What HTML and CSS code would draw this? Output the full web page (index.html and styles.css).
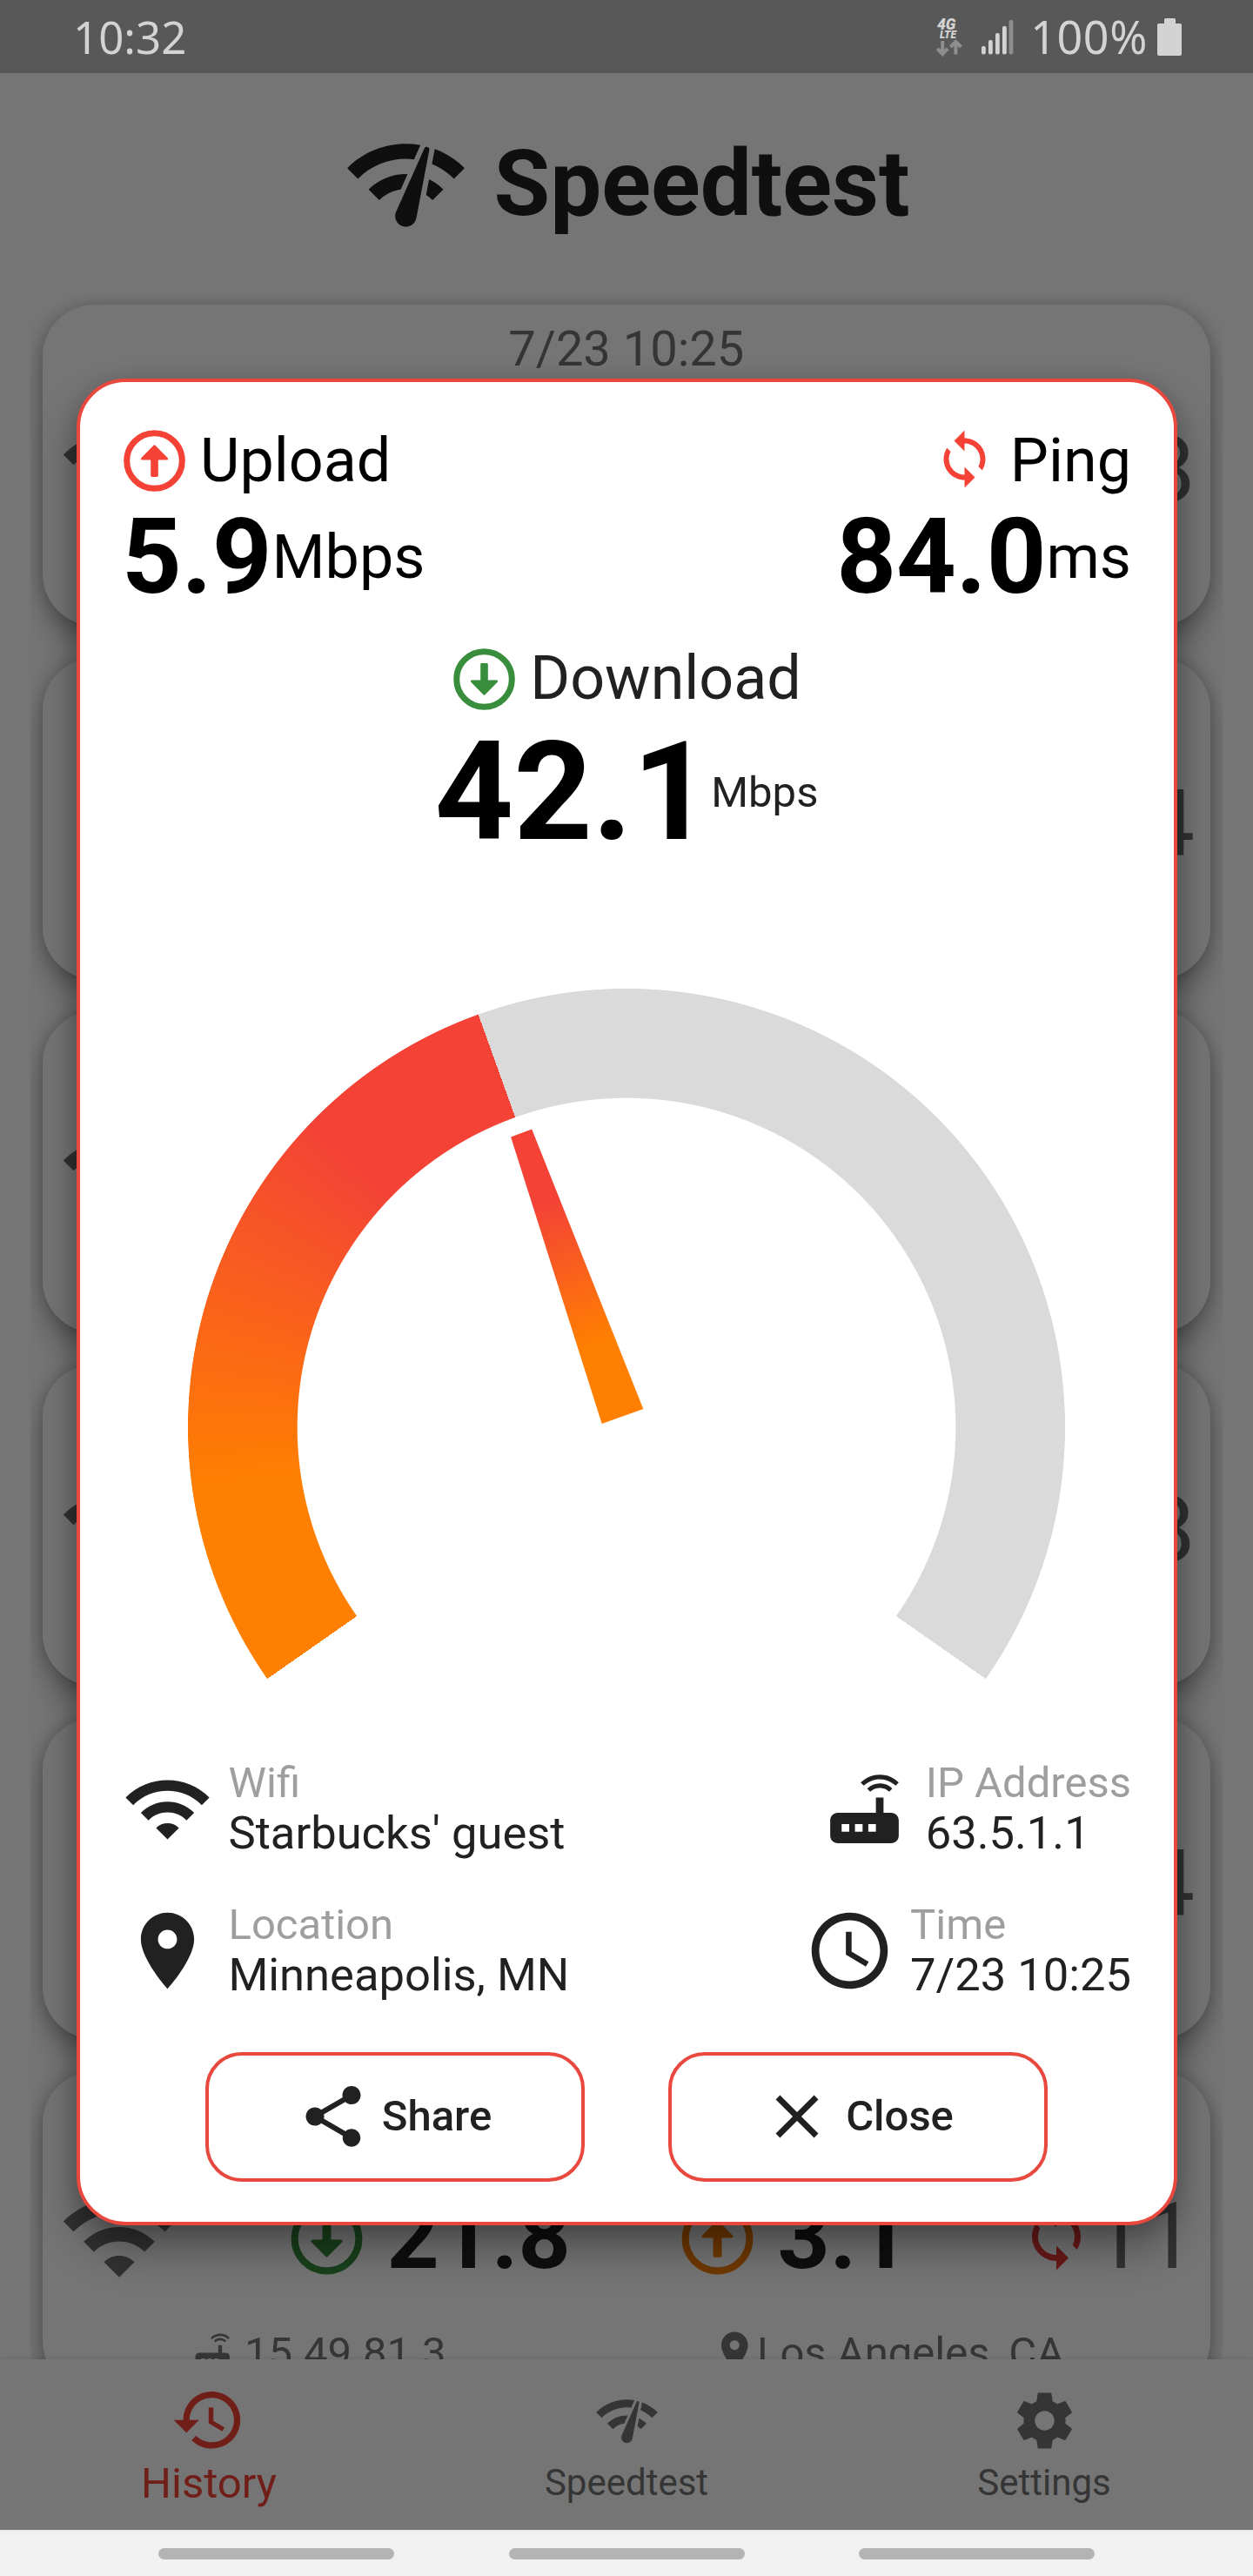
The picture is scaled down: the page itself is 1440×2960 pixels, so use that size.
FILE: index.html
```html
<!DOCTYPE html>
<html lang="en">
<head>
<meta charset="utf-8">
<title>Speedtest</title>
<link rel="stylesheet" href="styles.css">
</head>
<body>
<svg class="defs" width="0" height="0" aria-hidden="true">
  <defs>
    <symbol id="netcheck" viewBox="0 0 24 24"><path d="M15.9 5c-.17 0-.32.09-.41.23l-.07.15-5.18 11.65c-.16.29-.26.61-.26.96 0 1.11.9 2.01 2.01 2.01.96 0 1.77-.68 1.96-1.59l.01-.03L16.4 5.5c0-.28-.22-.5-.5-.5zM1 9l2 2c2.88-2.88 6.79-4.08 10.53-3.62l1.19-2.68C9.89 3.84 4.74 5.27 1 9zm20 2l2-2c-1.64-1.64-3.55-2.82-5.59-3.57l-.53 2.82c1.5.62 2.9 1.53 4.12 2.75zm-4 4l2-2c-.8-.8-1.7-1.42-2.66-1.89l-.55 2.92c.42.27.83.59 1.21.97zM5 13l2 2c1.13-1.13 2.56-1.79 4.03-2l1.28-2.88c-2.63-.08-5.3.87-7.31 2.88z"/></symbol>
    <symbol id="wifi" viewBox="0 0 24 24"><path d="M1 9l2 2c4.97-4.97 13.03-4.97 18 0l2-2C16.93 2.93 7.08 2.93 1 9zm8 8l3 3 3-3c-1.65-1.66-4.34-1.66-6 0zm-4-4l2 2c2.76-2.76 7.24-2.76 10 0l2-2C15.14 9.14 8.87 9.14 5 13z"/></symbol>
    <symbol id="up" viewBox="-37.5 -37.5 75 75"><circle r="31.8" fill="none" stroke="currentColor" stroke-width="7"/><path d="M0-16.7L14.2-2.3H2.9V17H-2.9V-2.3H-14.2z" stroke="currentColor" stroke-width="2.8" stroke-linejoin="round"/></symbol>
    <symbol id="down" viewBox="-37.5 -37.5 75 75"><circle r="31.8" fill="none" stroke="currentColor" stroke-width="7"/><path d="M0 16.7L14.2 2.3H2.9V-17H-2.9V2.3H-14.2z" stroke="currentColor" stroke-width="2.8" stroke-linejoin="round"/></symbol>
    <symbol id="sync" viewBox="0 0 24 24"><path d="M12 4V1L8 5l4 4V6c3.31 0 6 2.69 6 6 0 1.01-.25 1.97-.7 2.8l1.46 1.46C19.54 15.03 20 13.57 20 12c0-4.42-3.58-8-8-8zm0 14c-3.31 0-6-2.69-6-6 0-1.01.25-1.97.7-2.8L5.24 7.74C4.46 8.97 4 10.43 4 12c0 4.42 3.58 8 8 8v3l4-4-4-4v3z"/></symbol>
    <symbol id="router" viewBox="0 0 24 24"><path d="M20.2 5.9l.8-.8C19.6 3.7 17.8 3 16 3s-3.6.7-5 2.1l.8.8C13 4.8 14.5 4.2 16 4.2s3 .6 4.2 1.7zm-.9.8c-.9-.9-2.1-1.4-3.3-1.4s-2.4.5-3.3 1.4l.8.8c.7-.7 1.6-1 2.5-1s1.8.3 2.5 1l.8-.8zM19 13h-2V9h-2v4H5c-1.1 0-2 .9-2 2v4c0 1.1.9 2 2 2h14c1.1 0 2-.9 2-2v-4c0-1.1-.9-2-2-2zM8 18H6v-2h2v2zm3.500 0h-2v-2h2v2zm3.500 0h-2v-2h2v2z"/></symbol>
    <symbol id="place" viewBox="0 0 24 24"><path d="M12 2C8.13 2 5 5.13 5 9c0 5.25 7 13 7 13s7-7.75 7-13c0-3.87-3.13-7-7-7zm0 9.5c-1.38 0-2.5-1.12-2.5-2.5s1.12-2.5 2.5-2.5 2.5 1.12 2.5 2.5-1.12 2.5-2.5 2.5z"/></symbol>
    <symbol id="clock" viewBox="0 0 24 24"><path d="M11.99 2C6.47 2 2 6.48 2 12s4.47 10 9.99 10C17.52 22 22 17.52 22 12S17.52 2 11.99 2zM12 20c-4.42 0-8-3.58-8-8s3.58-8 8-8 8 3.58 8 8-3.58 8-8 8zm.5-13H11v6l5.25 3.15.75-1.23-4.5-2.67z"/></symbol>
    <symbol id="share" viewBox="0 0 24 24"><path d="M18 16.08c-.76 0-1.44.3-1.96.77L8.91 12.7c.05-.23.09-.46.09-.7s-.04-.47-.09-.7l7.05-4.11c.54.5 1.25.81 2.04.81 1.66 0 3-1.34 3-3s-1.34-3-3-3-3 1.34-3 3c0 .24.04.47.09.7L8.04 9.81C7.5 9.31 6.79 9 6 9c-1.66 0-3 1.34-3 3s1.34 3 3 3c.79 0 1.5-.31 2.04-.81l7.12 4.16c-.05.21-.08.43-.08.65 0 1.61 1.31 2.92 2.92 2.92 1.61 0 2.92-1.31 2.92-2.92s-1.31-2.92-2.92-2.92z"/></symbol>
    <symbol id="close" viewBox="0 0 24 24"><path d="M19 6.41L17.59 5 12 10.59 6.41 5 5 6.41 10.59 12 5 17.59 6.41 19 12 13.41 17.59 19 19 17.59 13.41 12z"/></symbol>
    <symbol id="history" viewBox="0 0 24 24"><path d="M13 3c-4.97 0-9 4.03-9 9H1l3.89 3.89.07.14L9 12H6c0-3.87 3.13-7 7-7s7 3.13 7 7-3.13 7-7 7c-1.93 0-3.68-.79-4.94-2.06l-1.42 1.42C8.27 19.99 10.51 21 13 21c4.97 0 9-4.03 9-9s-4.03-9-9-9zm-1 5v5l4.28 2.54.72-1.21-3.5-2.08V8H12z"/></symbol>
    <symbol id="gear" viewBox="0 0 24 24"><path d="M19.43 12.98c.04-.32.07-.64.07-.98s-.03-.66-.07-.98l2.11-1.65c.19-.15.24-.42.12-.64l-2-3.46c-.12-.22-.39-.3-.61-.22l-2.49 1c-.52-.4-1.08-.73-1.69-.98l-.38-2.65C14.46 2.18 14.25 2 14 2h-4c-.25 0-.46.18-.49.42l-.38 2.65c-.61.25-1.17.59-1.69.98l-2.49-1c-.23-.09-.49 0-.61.22l-2 3.46c-.13.22-.07.49.12.64l2.11 1.65c-.04.32-.07.65-.07.98s.03.66.07.98l-2.11 1.65c-.19.15-.24.42-.12.64l2 3.46c.12.22.39.3.61.22l2.49-1c.52.4 1.08.73 1.69.98l.38 2.65c.03.24.24.42.49.42h4c.25 0 .46-.18.49-.42l.38-2.65c.61-.25 1.17-.59 1.69-.98l2.49 1c.23.09.49 0 .61-.22l2-3.46c.12-.22.07-.49-.12-.64l-2.11-1.65zM12 15.5c-1.93 0-3.5-1.57-3.5-3.5s1.57-3.5 3.5-3.5 3.5 1.57 3.5 3.5-1.57 3.5-3.5 3.5z"/></symbol>
  </defs>
</svg>

<header class="status">
  <span class="time">10:32</span>
  <div class="status-right">
    <svg class="signal" viewBox="0 0 90 84">
      <text class="net net-4g" x="1" y="33.5">4G</text>
      <text class="net net-lte" x="4" y="44">LTE</text>
      <g fill="none" stroke="#8e8e8e" stroke-width="4"><path d="M7.2 47v15M1.2 55.8l6 6.2 6-6.2M22.4 62.5V48M16.4 54l6-6.2 6 6.2"/></g>
      <g fill="#d3d3d3"><rect x="52" y="53" width="4.8" height="9.6" rx="2"/><rect x="60" y="46" width="4.8" height="16.6" rx="2"/><rect x="68" y="38" width="4.8" height="24.6" rx="2"/><rect x="76" y="30" width="4.8" height="32.6" rx="2"/></g>
      <rect x="83.6" y="23" width="4.8" height="39.6" rx="2" fill="#8e8e8e"/>
    </svg>
    <span class="charge">100%</span>
    <svg class="battery" viewBox="0 0 28 43"><path d="M8 1.5Q8 0 9.5 0H19.5Q21 0 21 1.5V6H26Q28 6 28 8V41Q28 43 26 43H2Q0 43 0 41V8Q0 6 2 6H8z" fill="#d3d3d3"/></svg>
  </div>
</header>

<div class="app">
  <div class="title"><svg><use href="#netcheck"/></svg><h1>Speedtest</h1></div>

  <main class="list">
    <article class="card">
      <div class="date">7/23 10:25</div>
      <div class="metrics">
        <svg class="link"><use href="#wifi"/></svg>
        <div class="ping"><span>8</span></div>
      </div>
    </article>
    <article class="card">
      <div class="date"></div>
      <div class="metrics"><div class="ping"><span>4</span></div></div>
    </article>
    <article class="card">
      <div class="date"></div>
      <div class="metrics"><svg class="link"><use href="#wifi"/></svg></div>
    </article>
    <article class="card">
      <div class="date"></div>
      <div class="metrics">
        <svg class="link"><use href="#wifi"/></svg>
        <div class="ping"><span>8</span></div>
      </div>
    </article>
    <article class="card">
      <div class="date"></div>
      <div class="metrics"><div class="ping"><span>4</span></div></div>
    </article>
    <article class="card">
      <div class="date"></div>
      <div class="metrics">
        <svg class="link"><use href="#wifi"/></svg>
        <div class="metric green"><svg><use href="#down"/></svg><b>21.8</b></div>
        <div class="metric orange"><svg><use href="#up"/></svg><b>3.1</b></div>
        <div class="ping"><svg><use href="#sync"/></svg><span>11</span></div>
      </div>
      <div class="origin">
        <div><svg><use href="#router"/></svg><span>15.49.81.3</span></div>
        <div><svg><use href="#place"/></svg><span>Los Angeles, CA</span></div>
      </div>
    </article>
  </main>

  <nav class="tabs">
    <a class="tab active"><svg><use href="#history"/></svg><span>History</span></a>
    <a class="tab"><svg><use href="#netcheck"/></svg><span>Speedtest</span></a>
    <a class="tab"><svg><use href="#gear"/></svg><span>Settings</span></a>
  </nav>
  <div class="scrim"></div>
</div>

<footer class="sysnav"><i></i><i></i><i></i></footer>

<section class="dialog" role="dialog">
  <div class="top">
    <div class="stat">
      <div class="label"><svg class="red"><use href="#up"/></svg>Upload</div>
      <div class="value"><b>5.9</b><span>Mbps</span></div>
    </div>
    <div class="stat right">
      <div class="label"><svg class="red sync"><use href="#sync"/></svg>Ping</div>
      <div class="value"><b>84.0</b><span>ms</span></div>
    </div>
  </div>
  <div class="label download"><svg class="go"><use href="#down"/></svg>Download</div>
  <div class="speed"><b>42.1</b><span>Mbps</span></div>

  <div class="gauge">
    <div class="arc"></div>
    <svg class="needle" viewBox="0 0 1008 793">
      <defs><linearGradient id="heat" gradientUnits="userSpaceOnUse" x1="383" y1="166" x2="499.5" y2="491.5"><stop offset=".25" stop-color="#f44336"/><stop offset=".75" stop-color="#ff8000"/></linearGradient></defs>
      <path d="M371.1 170.4L395.2 161.6L523.3 483L475.7 500z" fill="url(#heat)"/>
    </svg>
  </div>

  <div class="info">
    <div class="info-col">
      <div class="fact"><svg><use href="#wifi"/></svg><div><small>Wifi</small><p>Starbucks' guest</p></div></div>
      <div class="fact"><svg><use href="#place"/></svg><div><small>Location</small><p>Minneapolis, MN</p></div></div>
    </div>
    <div class="info-col right">
      <div class="fact"><svg><use href="#router"/></svg><div><small>IP Address</small><p>63.5.1.1</p></div></div>
      <div class="fact"><svg><use href="#clock"/></svg><div><small>Time</small><p>7/23 10:25</p></div></div>
    </div>
  </div>

  <div class="actions">
    <button><svg><use href="#share"/></svg>Share</button>
    <button><svg><use href="#close"/></svg>Close</button>
  </div>
</section>
</body>
</html>
```
FILE: styles.css
```css
* { box-sizing: border-box; }
body {
  margin: 0;
  position: relative;
  width: 1440px;
  height: 2960px;
  overflow: hidden;
  background: #fff;
  color: #212121;
  font-family: Roboto, "Liberation Sans", sans-serif;
}
svg { display: block; flex: none; fill: currentColor; overflow: visible; }
h1, p { margin: 0; }
.defs { position: absolute; }

/* System status bar */
.status {
  height: 84px;
  padding: 0 82px 0 84px;
  display: flex;
  justify-content: space-between;
  align-items: center;
  background: #585858;
  color: #d3d3d3;
  font: 52px/84px "Noto Sans", sans-serif;
}
.time { font-size: 51px; }
.charge { letter-spacing: .6px; }
.status-right { display: flex; align-items: center; }
.signal { width: 90px; height: 84px; margin-right: 18px; }
.net { font-family: Roboto, sans-serif; font-weight: 900; font-style: italic; fill: #d3d3d3; }
.net-4g { font-size: 17.5px; }
.net-lte { font-size: 12px; }
.battery { width: 28px; height: 43px; margin-left: 11px; }

/* App behind the dialog */
.app {
  position: relative;
  height: 2823px;
  display: flex;
  flex-direction: column;
}
.scrim { position: absolute; inset: 0; background: rgba(0, 0, 0, .54); }
.title {
  height: 254px;
  flex: none;
  display: flex;
  justify-content: center;
  align-items: center;
  gap: 28px;
  padding-right: 2px;
}
.title svg { width: 147px; height: 147px; }
.title h1 { font-size: 105px; line-height: 123px; font-weight: 700; }
.list {
  flex: 1;
  min-height: 0;
  overflow: hidden;
  margin: 0 35px;
  padding: 11.5px 14px 0;
}
.card {
  height: 369px;
  margin-bottom: 37px;
  padding: 18.5px 18px 0 17.5px;
  border-radius: 59.5px;
  background: #fff;
  box-shadow: 0 14px 32px rgba(0, 0, 0, .3), 0 0 16px rgba(0, 0, 0, .14);
  color: #757575;
}
.date { font-size: 56px; line-height: 66px; text-align: center; height: 100.5px; }
.metrics {
  height: 140px;
  display: grid;
  grid-template-columns: 265px 449px 391px 1fr;
  align-items: center;
  font-size: 105px;
  line-height: 140px;
}
.link { width: 140px; height: 140px; color: #6e6e6e; }
.metric { display: flex; align-items: center; gap: 26px; }
.metric svg { width: 87px; height: 87px; margin-top: 6px; }
.metric b { color: #212121; padding-top: 2px; }
.green svg { color: #388e3c; }
.orange svg { color: #f57c00; }
.ping { grid-column: 4; display: flex; justify-content: space-between; align-items: center; color: #6e6e6e; }
.ping svg { width: 84px; height: 84px; color: #e53935; }
.ping span { padding-top: 2px; margin-left: auto; }
.origin {
  margin-top: 36.5px;
  display: grid;
  grid-template-columns: 600px 1fr;
  padding-left: 151px;
  font-size: 49px;
  line-height: 58px;
}
.origin div { display: flex; gap: 11px; }
.origin div + div { gap: 8px; }
.origin svg { width: 52.5px; height: 52.5px; }
.origin div + div svg { margin-right: -8px; }

/* Bottom tabs */
.tabs {
  height: 196px;
  flex: none;
  display: grid;
  grid-template-columns: repeat(3, 1fr);
  background: #fff;
  position: relative;
  box-shadow: 0 -1px 6px rgba(0, 0, 0, .1);
  color: #757575;
}
.tab { display: flex; flex-direction: column; align-items: center; padding-top: 32px; font-size: 42px; line-height: 50px; }
.tab svg { width: 77px; height: 77px; margin-bottom: 8px; }
.tab.active { color: #f44336; padding-top: 26px; font-size: 49px; line-height: 58px; }
.tab.active svg { width: 87.5px; height: 87.5px; margin-bottom: 0; }

/* Gesture hints */
.sysnav {
  height: 53px;
  padding-top: 21px;
  display: flex;
  justify-content: center;
  gap: 131.5px;
  background: #f1f1f1;
}
.sysnav i { width: 271px; height: 12.5px; border-radius: 7px; background: #b4b4b4; }

/* Result dialog */
.dialog {
  position: absolute;
  left: 87.5px;
  top: 434.5px;
  width: 1265px;
  height: 2122.5px;
  padding: 49px 48.5px 0;
  border: 4px solid #e8483d;
  border-radius: 56px;
  background: #fff;
  box-shadow: 0 28px 50px rgba(0, 0, 0, .32), 0 6px 24px rgba(0, 0, 0, .16);
}
.top { display: flex; justify-content: space-between; color: #000; }
.stat { display: flex; flex-direction: column; }
.right.stat { align-items: flex-end; }
.label { display: flex; align-items: center; gap: 15px; height: 82px; font-size: 70px; line-height: 82px; }
.label svg { width: 75px; height: 75px; margin-top: 2px; }
.label svg.sync { padding: 1.5px; margin-top: -2px; }
.red { color: #f44336; }
.go { color: #388e3c; }
.value { display: flex; align-items: center; height: 140px; font-size: 70px; }
.value b { font-size: 120px; line-height: 140px; }
.download { justify-content: center; margin-top: 28.5px; }
.speed { display: flex; justify-content: center; align-items: center; height: 184px; margin-top: -2px; font-size: 49px; }
.speed b { font-size: 158px; line-height: 184px; color: #000; }

.gauge { display: grid; justify-content: center; margin-top: 134px; }
.arc, .needle { grid-area: 1 / 1; width: 1008px; height: 793px; }
.arc {
  background: conic-gradient(from 235deg at 504px 504px,
    #ff8000 0 26.3deg, #f44336 78.9deg 105.25deg,
    #dadada 105.25deg 250deg, transparent 250deg);
  -webkit-mask: radial-gradient(circle at 504px 504px, transparent 377.8px, #000 378.8px 503.6px, transparent 504.4px);
  mask: radial-gradient(circle at 504px 504px, transparent 377.8px, #000 378.8px 503.6px, transparent 504.4px);
}

.info { display: flex; justify-content: space-between; margin-top: 91px; }
.info-col { display: flex; flex-direction: column; gap: 47px; }
.info-col.right { align-items: flex-end; }
.fact { display: flex; align-items: center; gap: 17.5px; height: 116px; }
.fact svg { width: 105px; height: 105px; }
.fact small { display: block; font-size: 49px; line-height: 57px; color: #9e9e9e; }
.fact p { font-size: 52.5px; line-height: 59px; }

.actions { display: flex; justify-content: space-evenly; margin-top: 58.5px; }
.actions button {
  width: 436px;
  height: 149px;
  display: flex;
  justify-content: center;
  align-items: center;
  gap: 14px;
  padding: 0 2px 0 0;
  border: 4px solid #e8483d;
  border-radius: 42px;
  background: #fff;
  color: #212121;
  font: 500 49px/58px Roboto, sans-serif;
}
.actions svg { width: 84px; height: 84px; }
```
